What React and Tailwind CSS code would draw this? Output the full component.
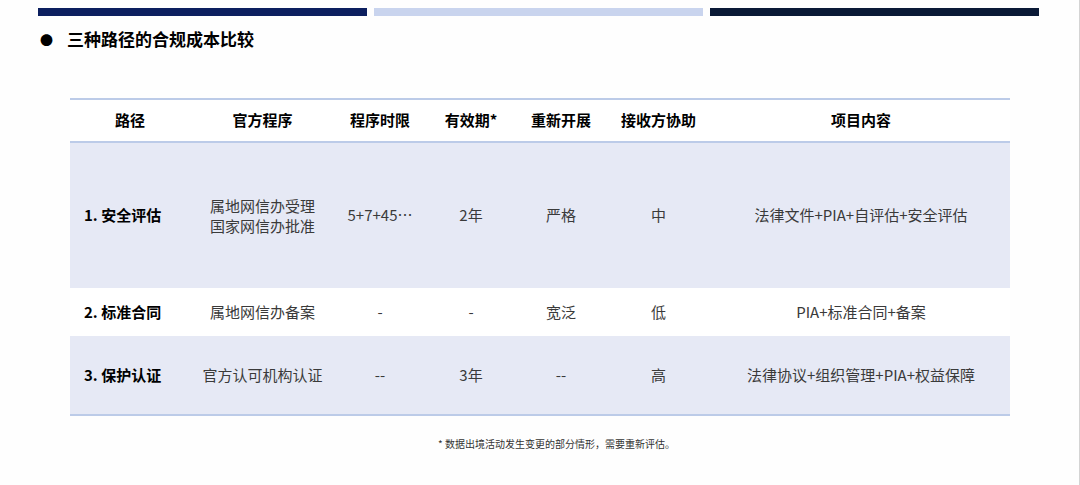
import React from 'react';

const cols = 'grid grid-cols-[120px_145px_90px_92px_88px_107px_298px]';

const headers = ['路径', '官方程序', '程序时限', '有效期*', '重新开展', '接收方协助', '项目内容'];

const rows = [
  {
    h: 'h-[145px]',
    bg: 'bg-[#e6e9f5]',
    cells: ['1. 安全评估', ['属地网信办受理', '国家网信办批准'], '5+7+45…', '2年', '严格', '中', '法律文件+PIA+自评估+安全评估'],
  },
  {
    h: 'h-[48px]',
    bg: 'bg-white',
    cells: ['2. 标准合同', '属地网信办备案', '-', '-', '宽泛', '低', 'PIA+标准合同+备案'],
  },
  {
    h: 'h-[78px]',
    bg: 'bg-[#e6e9f5]',
    cells: ['3. 保护认证', '官方认可机构认证', '--', '3年', '--', '高', '法律协议+组织管理+PIA+权益保障'],
  },
];

export default function App() {
  return (
    <div className="w-[1080px] h-[485px] bg-[#fefefe] border-r border-[#d4d4d4] font-['Noto_Sans_CJK_SC',sans-serif] text-[#222] overflow-hidden">
      {/* top bars */}
      <div className="flex gap-[7px] pl-[38px] pt-[8px]">
        <div className="w-[329px] h-[8px] bg-[#0c1f5f]" />
        <div className="w-[329px] h-[8px] bg-[#c9d4ee]" />
        <div className="w-[329px] h-[8px] bg-[#0a1936]" />
      </div>

      {/* title */}
      <div className="flex items-center gap-[14px] pl-[40px] mt-[11px] h-[24px]">
        <span className="text-[13px] leading-none text-black">●</span>
        <span className="text-[17px] font-bold text-black">三种路径的合规成本比较</span>
      </div>

      {/* table */}
      <div className="ml-[70px] mt-[47px] w-[940px]">
        <div className={`${cols} h-[45px] border-t-2 border-b-2 border-[#bccbe8] bg-white items-center`}>
          {headers.map((t) => (
            <div key={t} className="text-center text-[15px] font-bold text-black">
              {t}
            </div>
          ))}
        </div>
        {rows.map((r, i) => (
          <div key={i} className={`${cols} ${r.h} ${r.bg} items-center text-[15px] text-[#3a3a3a]`}>
            {r.cells.map((c, j) =>
              j === 0 ? (
                <div key={j} className="pl-[14px] font-bold text-black">
                  {c}
                </div>
              ) : Array.isArray(c) ? (
                <div key={j} className="text-center leading-[20px]">
                  {c.map((l) => (
                    <div key={l}>{l}</div>
                  ))}
                </div>
              ) : (
                <div key={j} className="text-center">
                  {c}
                </div>
              )
            )}
          </div>
        ))}
        <div className="h-[2px] bg-[#bccbe8]" />
      </div>

      {/* footnote */}
      <div className="pl-[438px] mt-[20px] text-[10px] text-[#333]">
        * 数据出境活动发生变更的部分情形，需要重新评估。
      </div>
    </div>
  );
}
